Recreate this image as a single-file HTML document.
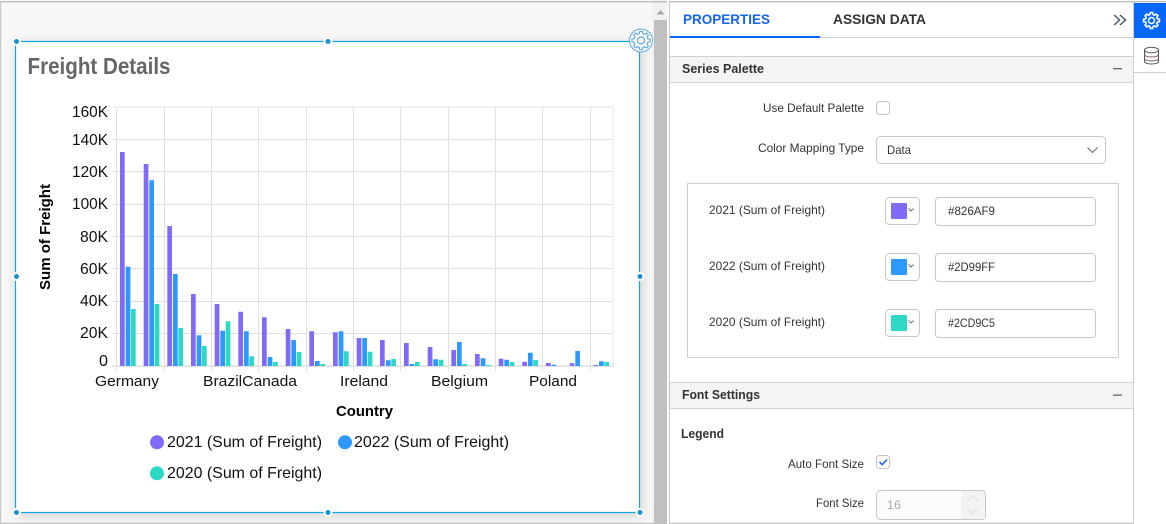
<!DOCTYPE html>
<html>
<head>
<meta charset="utf-8">
<style>
html,body{margin:0;padding:0;width:1166px;height:524px;overflow:hidden;background:#fff}
#w{position:absolute;left:15px;top:41px;width:625px;height:472px;background:#fff;box-shadow:2px 3px 12px rgba(0,0,0,.16)}
#bg{position:absolute;left:0;top:0;width:652px;height:524px;background:#f8f8f8}
#sb{position:absolute;left:652px;top:0;width:17px;height:524px;background:#f1f1f1}
svg{position:absolute;left:0;top:0}
text{font-family:"Liberation Sans",sans-serif}
.ax{font-size:16px;fill:#111}
.b{font-weight:bold}
.l{font-size:12px;fill:#333}
</style>
</head>
<body>
<div id="bg"></div>
<div id="sb"></div>
<div id="w"></div>
<svg width="1166" height="524" viewBox="0 0 1166 524" xmlns="http://www.w3.org/2000/svg">
<defs>
<polygon id="g" points="6.02,-1.5 7.9,-1.25 7.9,1.25 6.02,1.5 5.31,3.19 6.47,4.7 4.7,6.47 3.19,5.31 1.5,6.02 1.25,7.9 -1.25,7.9 -1.5,6.02 -3.19,5.31 -4.7,6.47 -6.47,4.7 -5.31,3.19 -6.02,1.5 -7.9,1.25 -7.9,-1.25 -6.02,-1.5 -5.31,-3.19 -6.47,-4.7 -4.7,-6.47 -3.19,-5.31 -1.5,-6.02 -1.25,-7.9 1.25,-7.9 1.5,-6.02 3.19,-5.31 4.7,-6.47 6.47,-4.7 5.31,-3.19"/>
</defs>

<!-- frame -->
<rect x="0" y="1" width="1166" height="1.4" fill="#bdbdbd"/>
<rect x="0" y="1" width="1.2" height="523" fill="#c8c8c8"/>
<rect x="0" y="522.6" width="1134" height="1.4" fill="#c8c8c8"/>

<!-- scrollbar -->
<rect x="654" y="20" width="13" height="504" fill="#c0c0c0"/>
<polygon points="656.5,14.5 660.5,10 664.5,14.5" fill="#a8a8a8"/>
<rect x="667" y="0" width="2" height="524" fill="#fafafa"/>
<rect x="669" y="2" width="1" height="522" fill="#c9c9c9"/>

<!-- widget border -->
<rect x="15.5" y="41.5" width="624" height="471" fill="none" stroke="#12a6e2" stroke-width="1.2"/>
<text x="27.500" y="74" font-size="23" font-weight="bold" fill="#666" textLength="143" lengthAdjust="spacingAndGlyphs">Freight Details</text>

<!-- grid -->
<g stroke="#dfdfdf" stroke-width="1" fill="none">
<path d="M112 139.5H613M112 171.5H613M112 204.5H613M112 236.5H613M112 268.5H613M112 301.5H613M112 333.5H613"/>
<path d="M164.5 107V371M211.5 107V371M258.5 107V371M306.5 107V371M353.5 107V371M400.5 107V371M448.5 107V371M495.5 107V371M542.5 107V371M590.5 107V371"/>
<path d="M116.5 107V371"/>
</g>
<rect x="113" y="106.4" width="500.500" height="1.600" fill="#ececec"/>
<rect x="112" y="365.200" width="502" height="1.800" fill="#e3e3e3"/>
<rect x="612.500" y="107" width="1.500" height="259" fill="#eeeeee"/>

<!-- bars -->
<path fill="#826AF9" d="M120 152h4.700V366h-4.700zM143.700 164h4.700V366h-4.700zM167.300 226h4.700V366h-4.700zM191 294h4.700V366h-4.700zM214.700 304h4.700V366h-4.700zM238.300 311.700h4.700V366h-4.700zM262 317.300h4.700V366h-4.700zM285.700 329h4.700V366h-4.700zM309.300 331.300h4.700V366h-4.700zM333 332.300h4.700V366h-4.700zM356.700 338h4.700V366h-4.700zM380 340h4.700V366h-4.700zM404 343h4.700V366h-4.700zM427.700 347h4.700V366h-4.700zM451.300 350h4.700V366h-4.700zM475 354h4.700V366h-4.700zM498.700 358.700h4.700V366h-4.700zM522.300 361.700h4.700V366h-4.700zM546 363h4.700V366h-4.700zM569.700 363.300h4.700V366h-4.700zM593.300 365h4.700V366h-4.700z"/>
<path fill="#2D99FF" d="M125.700 266.700h4.700V366h-4.700zM149.300 180.300h4.700V366h-4.700zM173 274h4.700V366h-4.700zM196.700 335.300h4.700V366h-4.700zM220.300 330.700h4.700V366h-4.700zM244 331.300h4.700V366h-4.700zM267.700 357h4.700V366h-4.700zM291.300 340h4.700V366h-4.700zM315 361h4.700V366h-4.700zM338.700 331.300h4.700V366h-4.700zM362.300 338h4.700V366h-4.700zM386 360.300h4.700V366h-4.700zM409.700 364h4.700V366h-4.700zM433.300 359.300h4.700V366h-4.700zM457 342h4.700V366h-4.700zM480.700 358.300h4.700V366h-4.700zM504.300 359.700h4.700V366h-4.700zM528 352.700h4.700V366h-4.700zM551.700 364.700h4.700V366h-4.700zM575.300 351h4.700V366h-4.700zM599 361.300h4.700V366h-4.700z"/>
<path fill="#2CD9C5" d="M131 309h4.700V366h-4.700zM154.700 304h4.700V366h-4.700zM178.300 328h4.700V366h-4.700zM202 346h4.700V366h-4.700zM225.700 321.300h4.700V366h-4.700zM249.300 356.300h4.700V366h-4.700zM273 362h4.700V366h-4.700zM296.700 352h4.700V366h-4.700zM320.300 364h4.700V366h-4.700zM344 351.300h4.700V366h-4.700zM367.700 351.700h4.700V366h-4.700zM391.300 359h4.700V366h-4.700zM415 362h4.700V366h-4.700zM438.700 359.700h4.700V366h-4.700zM462.300 364h4.700V366h-4.700zM486 365h4.700V366h-4.700zM509.700 362h4.700V366h-4.700zM533.300 360h4.700V366h-4.700zM604.300 362h4.700V366h-4.700z"/>

<!-- y labels -->
<g class="ax">
<text x="72" y="117" textLength="36" lengthAdjust="spacingAndGlyphs">160K</text>
<text x="72" y="145" textLength="36" lengthAdjust="spacingAndGlyphs">140K</text>
<text x="72" y="177" textLength="36" lengthAdjust="spacingAndGlyphs">120K</text>
<text x="72" y="209" textLength="36" lengthAdjust="spacingAndGlyphs">100K</text>
<text x="80" y="242" textLength="28" lengthAdjust="spacingAndGlyphs">80K</text>
<text x="80" y="274" textLength="28" lengthAdjust="spacingAndGlyphs">60K</text>
<text x="80" y="306" textLength="28" lengthAdjust="spacingAndGlyphs">40K</text>
<text x="80" y="338" textLength="28" lengthAdjust="spacingAndGlyphs">20K</text>
<text x="99" y="366" textLength="9" lengthAdjust="spacingAndGlyphs">0</text>
<text x="95" y="386" font-size="15" textLength="64" lengthAdjust="spacingAndGlyphs">Germany</text>
<text x="203" y="386" font-size="15" textLength="94" lengthAdjust="spacingAndGlyphs">BrazilCanada</text>
<text x="340" y="386" font-size="15" textLength="48" lengthAdjust="spacingAndGlyphs">Ireland</text>
<text x="431" y="386" font-size="15" textLength="57" lengthAdjust="spacingAndGlyphs">Belgium</text>
<text x="529" y="386" font-size="15" textLength="48" lengthAdjust="spacingAndGlyphs">Poland</text>
</g>
<text transform="translate(50,290) rotate(-90)" font-size="14.500" font-weight="bold" fill="#000" textLength="106" lengthAdjust="spacingAndGlyphs">Sum of Freight</text>
<text x="336" y="416" font-size="14.500" font-weight="bold" fill="#000" textLength="57" lengthAdjust="spacingAndGlyphs">Country</text>

<!-- legend -->
<circle cx="157" cy="442.300" r="7" fill="#826AF9"/>
<text class="ax" x="167" y="447" textLength="155" lengthAdjust="spacingAndGlyphs">2021 (Sum of Freight)</text>
<circle cx="345" cy="442.300" r="7" fill="#2D99FF"/>
<text class="ax" x="354" y="447" textLength="155" lengthAdjust="spacingAndGlyphs">2022 (Sum of Freight)</text>
<circle cx="157" cy="473.300" r="7" fill="#2CD9C5"/>
<text class="ax" x="167" y="478" textLength="155" lengthAdjust="spacingAndGlyphs">2020 (Sum of Freight)</text>

<!-- handles -->
<g fill="#1792d4" stroke="#ffffff" stroke-width="2">
<circle cx="16.500" cy="41.500" r="3.500"/><circle cx="328" cy="41.500" r="3.500"/>
<circle cx="16.500" cy="276.500" r="3.500"/><circle cx="640" cy="276.500" r="3.500"/>
<circle cx="16.500" cy="512.500" r="3.500"/><circle cx="328" cy="512.500" r="3.500"/><circle cx="640" cy="512.500" r="3.500"/>
</g>
<!-- widget gear -->
<circle cx="641" cy="40.500" r="11.500" fill="#fff" stroke="#5aa9dc" stroke-width="1"/>
<use href="#g" transform="translate(641,40.500) scale(1.150)" fill="none" stroke="#5aa9dc" stroke-width="1"/>
<circle cx="641" cy="40.500" r="3.500" fill="none" stroke="#5aa9dc" stroke-width="1.200"/>

<!-- tabs -->
<text x="683" y="24" font-size="14" font-weight="bold" fill="#1565f0" textLength="87" lengthAdjust="spacingAndGlyphs">PROPERTIES</text>
<text x="833" y="24" font-size="14" font-weight="bold" fill="#333" textLength="93" lengthAdjust="spacingAndGlyphs">ASSIGN DATA</text>
<rect x="670" y="37" width="463" height="1" fill="#cfcfcf"/>
<rect x="670" y="36" width="150" height="2" fill="#0a63f5"/>
<path d="M1114 15L1119.500 20L1114 25M1120 15L1125.500 20L1120 25" fill="none" stroke="#4a5a70" stroke-width="1.500"/>

<!-- sidebar -->
<rect x="1133" y="2" width="1" height="522" fill="#cfcfcf"/>
<rect x="1134" y="3" width="32" height="35" fill="#0567fb"/>
<use href="#g" transform="translate(1151.500,20.500)" fill="none" stroke="#fff" stroke-width="1.600"/>
<circle cx="1151.500" cy="20.500" r="3" fill="none" stroke="#fff" stroke-width="1.500"/>
<g fill="none" stroke="#555" stroke-width="1">
<ellipse cx="1151.500" cy="50" rx="7" ry="2.700"/>
<path d="M1144.500 50V61.500C1144.500 63 1147.500 64 1151.500 64S1158.500 63 1158.500 61.500V50"/>
<path d="M1144.500 54.500C1144.500 56 1147.500 57 1151.500 57S1158.500 56 1158.500 54.500" stroke="#7a5a6a"/>
<path d="M1144.500 58.500C1144.500 60 1147.500 61 1151.500 61S1158.500 60 1158.500 58.500" stroke="#7a5a6a"/>
</g>
<rect x="1134" y="72" width="32" height="1" fill="#cfcfcf"/>

<!-- Series Palette header -->
<rect x="670" y="56" width="463" height="27" fill="#f4f4f4"/>
<rect x="670" y="56" width="463" height="1" fill="#d2d2d2"/>
<rect x="670" y="82" width="463" height="1" fill="#d2d2d2"/>
<text x="682" y="73" font-size="12.500" font-weight="bold" fill="#333" textLength="82" lengthAdjust="spacingAndGlyphs">Series Palette</text>
<rect x="1113" y="68" width="9" height="1.300" fill="#666"/>

<!-- rows -->
<text class="l" x="763" y="112" textLength="101" lengthAdjust="spacingAndGlyphs">Use Default Palette</text>
<rect x="876.500" y="101.500" width="13" height="13" rx="3" fill="#fff" stroke="#c4c4c4"/>
<text class="l" x="758" y="152" textLength="106" lengthAdjust="spacingAndGlyphs">Color Mapping Type</text>
<rect x="876.500" y="136.500" width="229" height="27" rx="4" fill="#fff" stroke="#c8c8c8"/>
<text class="l" x="887" y="154" textLength="24" lengthAdjust="spacingAndGlyphs">Data</text>
<path d="M1087.500 147.500L1092.500 152.500L1097.500 147.500" fill="none" stroke="#666" stroke-width="1"/>

<rect x="687.500" y="183.500" width="431" height="174" fill="#fff" stroke="#cfcfcf"/>

<text class="l" x="709" y="214" textLength="116" lengthAdjust="spacingAndGlyphs">2021 (Sum of Freight)</text>
<rect x="885.500" y="197.500" width="34" height="27" rx="4" fill="#fff" stroke="#c8c8c8"/>
<rect x="891" y="203" width="16" height="16" rx="1" fill="#826AF9"/>
<path d="M908.500 208.500L911 211L913.500 208.500" fill="none" stroke="#666" stroke-width=".9"/>
<rect x="935.500" y="197.500" width="160" height="28" rx="3" fill="#fff" stroke="#c8c8c8"/>
<text class="l" x="948" y="215" textLength="47" lengthAdjust="spacingAndGlyphs">#826AF9</text>

<text class="l" x="709" y="270" textLength="116" lengthAdjust="spacingAndGlyphs">2022 (Sum of Freight)</text>
<rect x="885.500" y="253.500" width="34" height="27" rx="4" fill="#fff" stroke="#c8c8c8"/>
<rect x="891" y="259" width="16" height="16" rx="1" fill="#2D99FF"/>
<path d="M908.500 264.500L911 267L913.500 264.500" fill="none" stroke="#666" stroke-width=".9"/>
<rect x="935.500" y="253.500" width="160" height="28" rx="3" fill="#fff" stroke="#c8c8c8"/>
<text class="l" x="948" y="271" textLength="47" lengthAdjust="spacingAndGlyphs">#2D99FF</text>

<text class="l" x="709" y="326" textLength="116" lengthAdjust="spacingAndGlyphs">2020 (Sum of Freight)</text>
<rect x="885.500" y="309.500" width="34" height="27" rx="4" fill="#fff" stroke="#c8c8c8"/>
<rect x="891" y="315" width="16" height="16" rx="1" fill="#2CD9C5"/>
<path d="M908.500 320.500L911 323L913.500 320.500" fill="none" stroke="#666" stroke-width=".9"/>
<rect x="935.500" y="309.500" width="160" height="28" rx="3" fill="#fff" stroke="#c8c8c8"/>
<text class="l" x="948" y="327" textLength="47" lengthAdjust="spacingAndGlyphs">#2CD9C5</text>

<!-- Font Settings -->
<rect x="670" y="382" width="463" height="27" fill="#f4f4f4"/>
<rect x="670" y="382" width="463" height="1" fill="#d2d2d2"/>
<rect x="670" y="408" width="463" height="1" fill="#d2d2d2"/>
<text x="682" y="399" font-size="12.500" font-weight="bold" fill="#333" textLength="78" lengthAdjust="spacingAndGlyphs">Font Settings</text>
<rect x="1113" y="394.500" width="9" height="1.300" fill="#666"/>
<text x="681" y="438" font-size="12.500" font-weight="bold" fill="#333" textLength="43" lengthAdjust="spacingAndGlyphs">Legend</text>
<text class="l" x="788" y="468" textLength="76" lengthAdjust="spacingAndGlyphs">Auto Font Size</text>
<rect x="876.500" y="455.500" width="13" height="13" rx="3" fill="#fff" stroke="#c4c4c4"/>
<path d="M879.500 462L882.200 464.700L887 459.500" fill="none" stroke="#1565f0" stroke-width="1.500"/>
<text class="l" x="816" y="507" textLength="48" lengthAdjust="spacingAndGlyphs">Font Size</text>
<rect x="876.500" y="490.500" width="109" height="29" rx="4" fill="#fcfcfc" stroke="#c8c8c8"/>
<path d="M961 491H981a4 4 0 0 1 4 4V515a4 4 0 0 1-4 4H961z" fill="#f3f3f3"/>
<text x="887" y="509" font-size="12" fill="#a8a8a8" textLength="14" lengthAdjust="spacingAndGlyphs">16</text>
<path d="M967.500 500.500L973 495.500L978.500 500.500M967.500 508.500L973 513.500L978.500 508.500" fill="none" stroke="#dcdcdc" stroke-width="1"/>
</svg>
</body>
</html>
